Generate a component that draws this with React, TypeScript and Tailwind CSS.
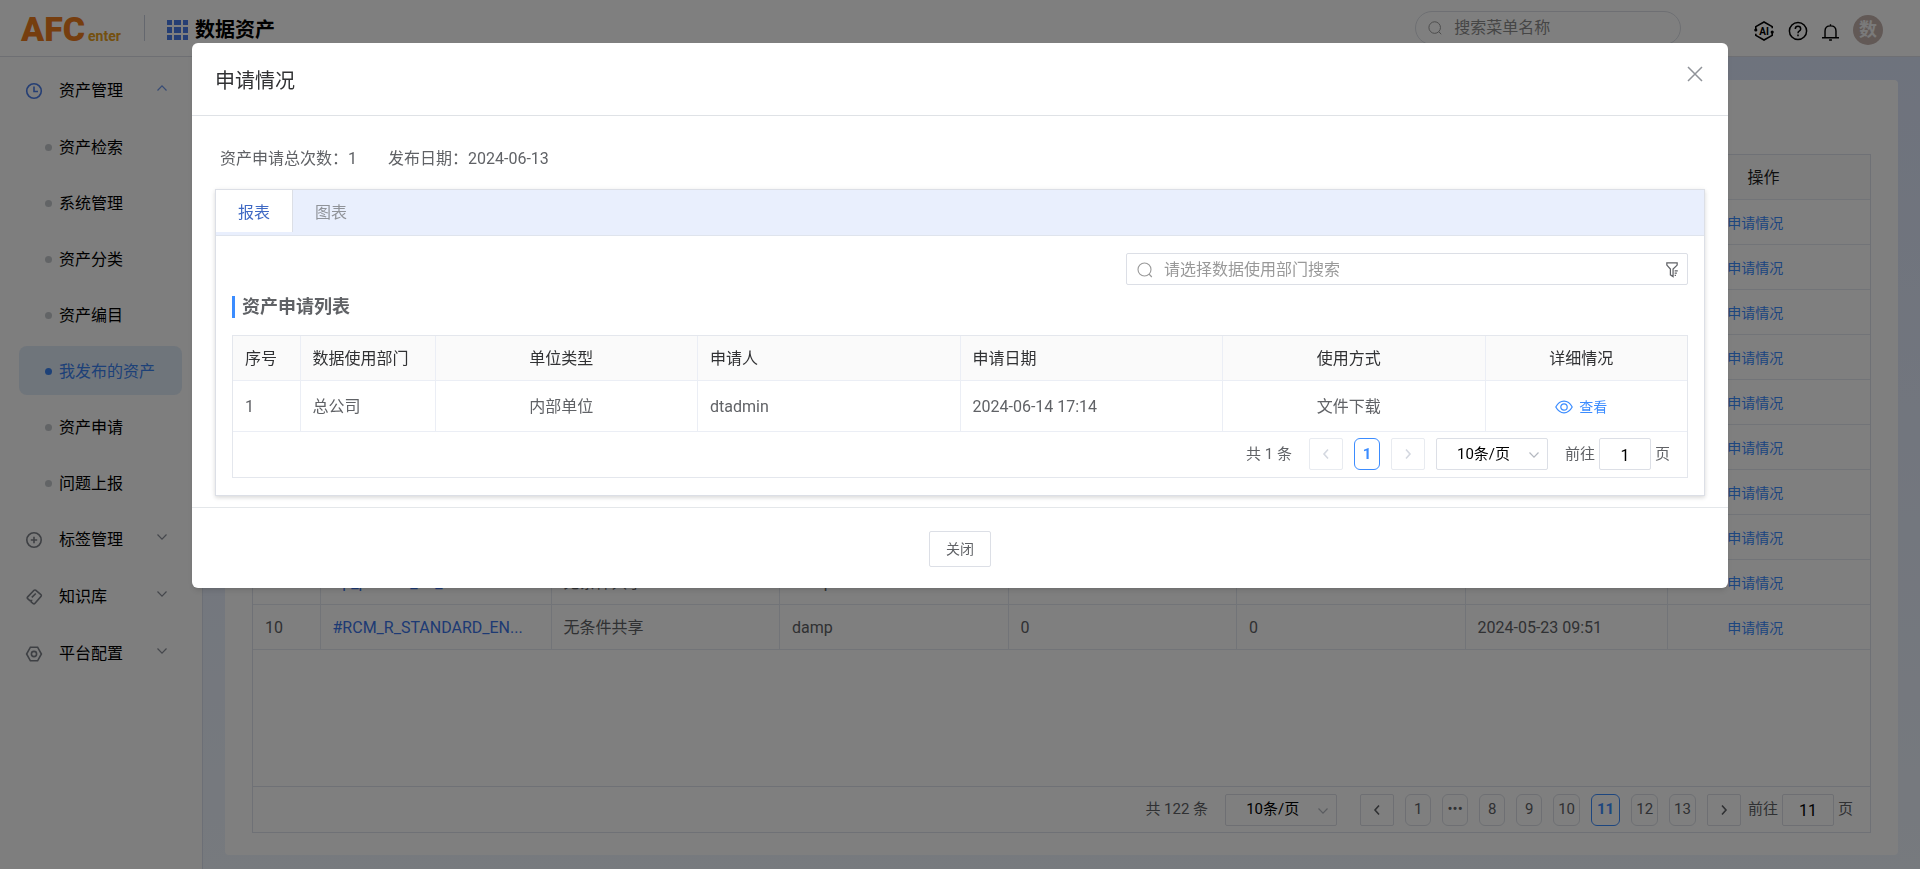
import React from "react";

const groups = [
  {
    label: "资产管理",
    icon: "clock",
    open: true,
    items: [
      "资产检索",
      "系统管理",
      "资产分类",
      "资产编目",
      "我发布的资产",
      "资产申请",
      "问题上报",
    ],
  },
  { label: "标签管理", icon: "plus", open: false, items: [] },
  { label: "知识库", icon: "tag", open: false, items: [] },
  { label: "平台配置", icon: "hex", open: false, items: [] },
];

const names = [
  "#p_person_01_a",
  "#p_person_02_a",
  "#p_person_03_a",
  "#p_person_04_a",
  "#p_person_05_a",
  "#p_person_06_a",
  "#p_person_07_a",
  "#p_person_08_a",
  "#p_pcase1_ab_t",
  "#RCM_R_STANDARD_EN...",
];

const Chevron = ({ className }: { className: string }) => (
  <svg viewBox="0 0 12 8" className={className} fill="none" stroke="currentColor" strokeWidth="1.2">
    <path d="M1.500 1.500 6 6.200l4.500-4.700" />
  </svg>
);

const SearchIcon = ({ className }: { className: string }) => (
  <svg viewBox="0 0 16 16" className={className} fill="none" stroke="currentColor" strokeWidth="1.1">
    <circle cx="7.5" cy="7.5" r="6.5" />
    <path d="m12 12 2.8 3" />
  </svg>
);

const MenuIcon = ({ name }: { name: string }) => {
  if (name === "clock") {
    return (
      <svg viewBox="0 0 18 18" className="size-[18px] text-[#4a7de8]" fill="none" stroke="currentColor" strokeWidth="1.6">
        <circle cx="9" cy="9" r="7.3" />
        <path d="M9 4.5V9.5h4" />
      </svg>
    );
  }
  return (
    <svg viewBox="0 0 18 18" className="size-[18px] text-[#7c8088]" fill="none" stroke="currentColor" strokeWidth="1.6">
      {name === "plus" && (
        <>
          <circle cx="9" cy="9" r="7.2" />
          <path d="M9 5.8v6.4M5.8 9h6.4" />
        </>
      )}
      {name === "tag" && (
        <>
          <path d="M10.6 2.2 15.9 6.6c.6.5.6 1 .2 1.6L9.8 15.400c-.5.6-1 .6-1.600.2L6.200 14l.3-1.500-1.600.1-2.300-2c-.6-.5-.5-1-.1-1.500L9 2.300c.6-.5 1-.5 1.600-.1Z" />
          <path d="m6.8 9.3 4-3.8" />
        </>
      )}
      {name === "hex" && (
        <>
          <path d="M5.4 2.2h7.2L16.400 9l-3.800 6.800H5.400L1.600 9Z" />
          <circle cx="9" cy="9" r="2.6" />
        </>
      )}
    </svg>
  );
};

const Header = () => (
  <header className="flex h-[57px] shrink-0 items-center border-b border-[#dcdfe6] bg-white">
    <svg viewBox="0 0 110 44" className="ml-[20px] h-11 w-[110px] shrink-0" role="img" aria-label="AFCenter">
      <text x="1" y="35" fontSize="34" fontWeight="900" fill="#ed7d1f" fontFamily="Roboto">
        AFC
      </text>
      <text x="68" y="35" fontSize="14" fontWeight="700" fill="#e8a020" fontFamily="Roboto">
        enter
      </text>
    </svg>
    <div className="ml-[14px] h-[26px] w-px bg-[#c9cfdc]" />
    <svg viewBox="0 0 21 20" className="mt-1 ml-[22px] h-5 w-[21px] shrink-0" fill="#4a7de8">
      <path d="M0 0h5v5H0zM7 0h7v5H7zM16 0h5v5h-5zM0 7h5v6H0zM7 7h7v6H7zM16 7h5v6h-5zM0 15h5v5H0zM7 15h7v5H7zM16 15h5v5h-5z" />
    </svg>
    <h1 className="mt-1 ml-[7px] text-xl font-bold text-black">数据资产</h1>
    <label className="ml-auto flex h-[34px] w-[266px] items-center rounded-full border border-[#dcdfe6] px-3">
      <SearchIcon className="size-4 text-[#999]" />
      <input
        aria-label="搜索菜单名称"
        placeholder="搜索菜单名称"
        className="ml-3 w-full bg-transparent text-base outline-none placeholder:text-[#8c8c8c]"
      />
    </label>
    <div className="mr-[37px] ml-[73px] flex items-center gap-[14px] text-black">
      <button aria-label="AI" className="mt-[6px]">
        <svg viewBox="0 0 20 20" className="size-5" fill="none" stroke="currentColor" strokeWidth="1.6">
          <path d="M1.800 9V5.600L10 1l8.200 4.600v1.600M18.200 11v3.400L10 19l-8.200-4.600v-1.600" />
          <circle cx="1.800" cy="9" r=".8" />
          <circle cx="18.200" cy="11" r=".8" />
          <text x="10" y="13.500" textAnchor="middle" fontSize="10" fontWeight="700" fill="currentColor" stroke="none" fontFamily="Roboto">
            AI
          </text>
        </svg>
      </button>
      <button aria-label="帮助" className="mt-[6px]">
        <svg viewBox="0 0 20 20" className="size-5" fill="none" stroke="currentColor" strokeWidth="1.5">
          <circle cx="10" cy="10" r="8.600" />
          <path d="M7.300 8q0-2.700 2.700-2.700T12.700 8q0 1.300-1.500 2.200-1.200.7-1.200 2M10 13.600v1.600" />
        </svg>
      </button>
      <button aria-label="消息" className="mt-[8px]">
        <svg viewBox="0 0 18 18" className="w-[17px]" fill="none" stroke="currentColor" strokeWidth="1.5">
          <path d="M0 14.600h18M3.200 14.600V7.500Q3.200 2 9 2t5.800 5.500v7.100M9 .3V2M7.500 17h3" />
        </svg>
      </button>
      <button className="mt-[3px] size-[30px] rounded-full bg-[#c4b2ac] text-lg leading-none font-bold text-[#f4f4f4]">数</button>
    </div>
  </header>
);

const Sidebar = () => (
  <nav className="flex w-[203px] shrink-0 flex-col gap-2 border-r border-[#d8dfec] bg-[#fcfcfc] pt-[9px] text-base text-black">
    {groups.map((group) => (
      <div key={group.label} className="flex flex-col gap-[7px]">
        <button className="flex h-[49px] items-center pr-[34px] pl-[25px]">
          <MenuIcon name={group.icon} />
          <span className="ml-4">{group.label}</span>
          <Chevron
            className={
              group.open
                ? "mb-[6px] ml-auto h-2 w-3 rotate-180 text-[#6f97ea]"
                : "mb-[6px] ml-auto h-2 w-3 text-[#8a8f99]"
            }
          />
        </button>
        {group.items.map((item) => (
          <a
            key={item}
            href="#"
            className={
              item === "我发布的资产"
                ? "mr-5 ml-[19px] flex h-[49px] items-center gap-[7px] rounded-lg bg-[#dfeaf6] pt-[2px] pl-[26px] text-[#3b82f0]"
                : "mr-5 ml-[19px] flex h-[49px] items-center gap-[7px] rounded-lg pt-[2px] pl-[26px]"
            }
          >
            <span
              className={
                item === "我发布的资产"
                  ? "size-[7px] rounded-full bg-[#3b82f0]"
                  : "size-[7px] rounded-full bg-[#c4c8cc]"
              }
            />
            {item}
          </a>
        ))}
      </div>
    ))}
  </nav>
);

const PageSize = () => (
  <div className="relative">
    <select
      aria-label="每页条数"
      className="h-8 w-28 appearance-none rounded-xs border border-[#dcdfe6] bg-white pl-5 text-[15px] text-black"
    >
      <option>10条/页</option>
    </select>
    <Chevron className="pointer-events-none absolute top-[13px] right-2 h-2 w-3 text-[#b4b8c0]" />
  </div>
);

const Arrow = ({ dir, disabled }: { dir: "left" | "right"; disabled?: boolean }) => (
  <button
    disabled={disabled}
    aria-label={dir === "left" ? "上一页" : "下一页"}
    className="flex h-8 w-[34px] items-center justify-center rounded-xs border border-[#dcdfe6] text-[#606266] disabled:border-[#e8ebf0] disabled:text-[#d4d8e0]"
  >
    <svg viewBox="0 0 8 12" className="h-3 w-2" fill="none" stroke="currentColor" strokeWidth="1.6">
      <path d={dir === "left" ? "M6 1.500 2 6l4 4.500" : "m2 1.500 4 4.500-4 4.500"} />
    </svg>
  </button>
);

const Page = ({ label, active }: { label: string; active?: boolean }) => (
  <button
    className={
      active
        ? "h-8 min-w-[26px] rounded-md border border-[#3b8cff] px-[5px] font-bold text-[#3b8cff]"
        : "h-8 min-w-[26px] rounded-md border border-[#dcdfe6] px-1"
    }
  >
    {label}
  </button>
);

const Jump = ({ page }: { page: string }) => (
  <label className="flex items-center gap-1">
    前往
    <input
      defaultValue={page}
      className="h-8 w-[52px] rounded-xs border border-[#dcdfe6] bg-white pt-[2px] text-center text-base text-black"
    />
    页
  </label>
);

const AssetTable = () => (
  <main className="flex grow flex-col bg-linear-to-b from-[#dde6fb] to-[#eef4fd] pt-[23px] pr-[22px] pb-[14px] pl-[22px]">
    <section className="flex grow flex-col rounded-sm bg-white px-[27px] pt-[74px] pb-[22px]">
      <div className="flex grow flex-col border border-[#dfe3ec]">
        <table className="w-full table-fixed border-collapse text-left text-base text-[#606266] [&_td]:pt-[2px] [&_th]:pt-[2px]">
          <colgroup>
            <col className="w-[67px]" />
            <col className="w-[231px]" />
            <col />
            <col />
            <col />
            <col />
            <col className="w-[202px]" />
            <col className="w-[203px]" />
          </colgroup>
          <thead>
            <tr className="h-[44px] border-b border-[#e4e8f0] bg-[#fafafa] text-[#1f1f1f]">
              <th className="pl-3 font-normal">序号</th>
              <th className="pl-3 font-normal">资产名称</th>
              <th className="pl-3 font-normal">共享类型</th>
              <th className="pl-3 font-normal">发布人</th>
              <th className="pl-3 font-normal">申请次数</th>
              <th className="pl-3 font-normal">使用次数</th>
              <th className="pl-3 font-normal">发布时间</th>
              <th className="pr-[10px] text-center font-normal">操作</th>
            </tr>
          </thead>
          <tbody>
            {names.map((name, i) => (
              <tr key={name} className="h-[45px] border-b border-[#e4e8f0]">
                <td className="border-r border-[#e4e8f0] pl-3">{i + 1}</td>
                <td className="border-r border-[#e4e8f0] pl-3">
                  <a href="#" className="text-[#3b74e8]">{name}</a>
                </td>
                <td className="border-r border-[#e4e8f0] pl-3">无条件共享</td>
                <td className="border-r border-[#e4e8f0] pl-3">damp</td>
                <td className="border-r border-[#e4e8f0] pl-3">0</td>
                <td className="border-r border-[#e4e8f0] pl-3">0</td>
                <td className="border-r border-[#e4e8f0] pl-3">2024-05-23 09:51</td>
                <td className="pr-[27px] text-center">
                  <a href="#" className="text-sm text-[#3b8cff]">申请情况</a>
                </td>
              </tr>
            ))}
          </tbody>
        </table>
        <div className="mt-auto flex h-[46px] items-center justify-end border-t border-[#dfe3ec] pr-[17px] text-[15px] text-[#606266]">
          <span className="mr-[17px]">共 122 条</span>
          <PageSize />
          <div className="mr-[7px] ml-[23px] flex gap-[11px]">
            <Arrow dir="left" />
            <Page label="1" />
            <Page label="•••" />
            <Page label="8" />
            <Page label="9" />
            <Page label="10" />
            <Page label="11" active />
            <Page label="12" />
            <Page label="13" />
            <Arrow dir="right" />
          </div>
          <Jump page="11" />
        </div>
      </div>
    </section>
  </main>
);

const ApplyTable = () => (
  <div className="border border-[#e4e7ed]">
    <table className="w-full table-fixed border-collapse text-left text-base text-[#606266] [&_td]:pt-[2px] [&_th]:pt-[2px]">
      <colgroup>
        <col className="w-[67px]" />
        <col className="w-[135px]" />
        <col />
        <col />
        <col />
        <col />
        <col className="w-[202px]" />
      </colgroup>
      <thead>
        <tr className="h-[44px] border-b border-[#ebeef5] bg-[#fafafa] text-[#303133]">
          <th className="border-r border-[#ebeef5] pl-3 font-normal">序号</th>
          <th className="border-r border-[#ebeef5] pl-3 font-normal">数据使用部门</th>
          <th className="border-r border-[#ebeef5] pr-[10px] text-center font-normal">单位类型</th>
          <th className="border-r border-[#ebeef5] pl-3 font-normal">申请人</th>
          <th className="border-r border-[#ebeef5] pl-3 font-normal">申请日期</th>
          <th className="border-r border-[#ebeef5] pr-[10px] text-center font-normal">使用方式</th>
          <th className="pr-[10px] text-center font-normal">详细情况</th>
        </tr>
      </thead>
      <tbody>
        <tr className="h-[51px] border-b border-[#ebeef5]">
          <td className="border-r border-[#ebeef5] pl-3">1</td>
          <td className="border-r border-[#ebeef5] pl-3">总公司</td>
          <td className="border-r border-[#ebeef5] pr-[10px] text-center">内部单位</td>
          <td className="border-r border-[#ebeef5] pl-3">dtadmin</td>
          <td className="border-r border-[#ebeef5] pl-3">2024-06-14 17:14</td>
          <td className="border-r border-[#ebeef5] pr-[10px] text-center">文件下载</td>
          <td className="pr-[10px]">
            <a href="#" className="flex items-center justify-center gap-[6px] text-sm text-[#3b8cff]">
              <svg viewBox="0 0 18 14" className="h-[14px] w-[18px]" fill="none" stroke="currentColor" strokeWidth="1.2">
                <path d="M.8 7Q4 1.200 9 1.200T17.200 7Q14 12.800 9 12.800T.8 7Z" />
                <circle cx="9" cy="7" r="3.200" />
              </svg>
              查看
            </a>
          </td>
        </tr>
      </tbody>
    </table>
    <div className="flex h-[45px] items-center justify-end pr-[17px] text-[15px] text-[#606266]">
      <span className="mr-[17px]">共 1 条</span>
      <div className="mr-[11px] flex gap-[11px]">
        <Arrow dir="left" disabled />
        <Page label="1" active />
        <Arrow dir="right" disabled />
      </div>
      <div className="mr-[17px]">
        <PageSize />
      </div>
      <Jump page="1" />
    </div>
  </div>
);

const ApplyDialog = () => (
  <div className="fixed inset-0 bg-black/50">
    <div role="dialog" aria-label="申请情况" className="mx-auto mt-[5vh] w-4/5 rounded-md bg-white shadow-md">
      <div className="flex h-[73px] items-center border-b border-[#dfe2e6] px-[23px]">
        <h2 className="mt-1 text-xl text-[#303133]">申请情况</h2>
        <button aria-label="关闭窗口" className="mb-[10px] ml-auto p-[2px] text-[#909399]">
          <svg viewBox="0 0 16 16" className="size-4" fill="none" stroke="currentColor" strokeWidth="1.5">
            <path d="m1 1 14 14M15 1 1 15" />
          </svg>
        </button>
      </div>
      <div className="px-[23px] pt-[31px] pb-[11px]">
        <p className="mb-[18px] flex gap-[31px] px-[5px] text-base text-[#606266]">
          <span>资产申请总次数：1</span>
          <span>发布日期：2024-06-13</span>
        </p>
        <div className="border border-[#dcdfe6] shadow-[0_2px_4px_rgba(0,0,0,0.12),0_0_6px_rgba(0,0,0,0.04)]">
          <div role="tablist" className="flex h-[46px] items-start border-b border-[#dfe4ed] bg-[#e9effd] text-base">
            <button role="tab" aria-selected="true" className="h-[42px] border-r border-[#dcdfe6] bg-white px-[22px] pt-1 text-[#3f69c4]">
              报表
            </button>
            <button role="tab" aria-selected="false" className="h-[42px] px-[22px] pt-1 text-[#909399]">
              图表
            </button>
          </div>
          <div className="flex flex-col px-4 pt-[17px] pb-[17px]">
            <label className="flex h-8 w-[562px] items-center self-end rounded-xs border border-[#dcdfe6] pt-[2px] pr-2 pl-[10px] text-[#999]">
              <SearchIcon className="size-4 shrink-0" />
              <input
                aria-label="请选择数据使用部门搜索"
                placeholder="请选择数据使用部门搜索"
                className="ml-[11px] w-full text-base outline-none placeholder:text-[#999]"
              />
              <svg viewBox="0 0 14 18" className="h-4 w-[14px] shrink-0 text-[#606266]" fill="none" stroke="currentColor" strokeWidth="1.4">
                <path d="M12.800 1H1.200v2.500L5.200 8v6.500l3 2V8l4.600-4.500ZM10 10h3.500M10 12.500h2.500M10 15h1.500" />
              </svg>
            </label>
            <h3 className="mt-[11px] mb-[17px] border-l-3 border-[#3b8cff] pl-[7px] text-lg leading-[22px] font-bold text-[#606266]">
              资产申请列表
            </h3>
            <ApplyTable />
          </div>
        </div>
      </div>
      <div className="flex justify-center border-t border-[#e4e7ea] pt-[23px] pb-[21px]">
        <button className="h-9 w-[62px] rounded-xs border border-[#dcdfe6] text-sm text-[#606266]">关闭</button>
      </div>
    </div>
  </div>
);

const App = () => {
  return (
    <div className="flex min-h-screen flex-col font-['Roboto','Noto_Sans_CJK_SC',sans-serif]">
      <Header />
      <div className="flex grow">
        <Sidebar />
        <AssetTable />
      </div>
      <ApplyDialog />
    </div>
  );
};

export default App;
